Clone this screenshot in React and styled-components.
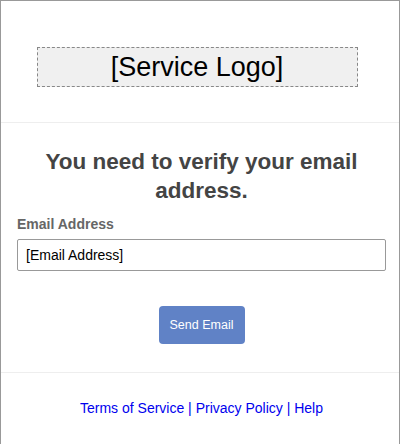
import React from 'react';
import styled, { createGlobalStyle } from 'styled-components';

const GlobalStyle = createGlobalStyle`
    html, body {
        margin: 0;
        padding: 0;
        background: #fff;
    }
    body {
        font-family: 'Liberation Sans', Arial, sans-serif;
    }
`;

const Page = styled.div`
    box-sizing: border-box;
    width: 400px;
    min-height: 444px;
    border: 1px solid #999;
    border-bottom: none;
    background: #fff;
`;

const Header = styled.header`
    display: flex;
    justify-content: center;
    padding: 46px 6px 35px 0;
`;

const LogoBox = styled.div`
    box-sizing: border-box;
    width: 321px;
    height: 40px;
    display: flex;
    align-items: center;
    justify-content: center;
    background: #f0f0f0;
    border: 1px dashed #888;
    color: #000;
    font-size: 27px;
    line-height: 1;
`;

const Main = styled.main`
    display: flex;
    flex-direction: column;
    border-top: 1px solid #eee;
    padding: 24px 13px 28px 16px;
`;

const Title = styled.h1`
    margin: 0;
    font-size: 22.5px;
    line-height: 29px;
    font-weight: bold;
    color: #444;
    text-align: center;
`;

const Label = styled.label`
    margin-top: 11px;
    font-size: 14px;
    line-height: 16px;
    font-weight: bold;
    color: #666;
`;

const Input = styled.input`
    box-sizing: border-box;
    margin-top: 7px;
    width: 369px;
    height: 32px;
    padding: 0 8px;
    border: 1px solid #999;
    border-radius: 2px;
    font-family: 'Liberation Sans', Arial, sans-serif;
    font-size: 14px;
    color: #000;
    outline: none;
`;

const Button = styled.button`
    align-self: center;
    margin-top: 35px;
    width: 86px;
    height: 38px;
    border: none;
    border-radius: 4px;
    background: #6082c6;
    color: #fff;
    font-family: 'Liberation Sans', Arial, sans-serif;
    font-size: 12.5px;
    cursor: pointer;
`;

const Footer = styled.footer`
    border-top: 1px solid #eee;
    padding: 27px 0 0 3px;
    text-align: center;
    font-size: 14px;
    line-height: 16px;
    color: #0000ee;
`;

const FooterLink = styled.a`
    color: #0000ee;
    text-decoration: none;
`;

export default function App() {
    return (
        <Page>
            <GlobalStyle />
            <Header>
                <LogoBox>[Service Logo]</LogoBox>
            </Header>
            <Main>
                <Title>You need to verify your email address.</Title>
                <Label htmlFor="email">Email Address</Label>
                <Input id="email" type="text" defaultValue="[Email Address]" />
                <Button type="button">Send Email</Button>
            </Main>
            <Footer>
                <FooterLink href="#">Terms of Service</FooterLink> | <FooterLink href="#">Privacy Policy</FooterLink> | <FooterLink href="#">Help</FooterLink>
            </Footer>
        </Page>
    );
}
